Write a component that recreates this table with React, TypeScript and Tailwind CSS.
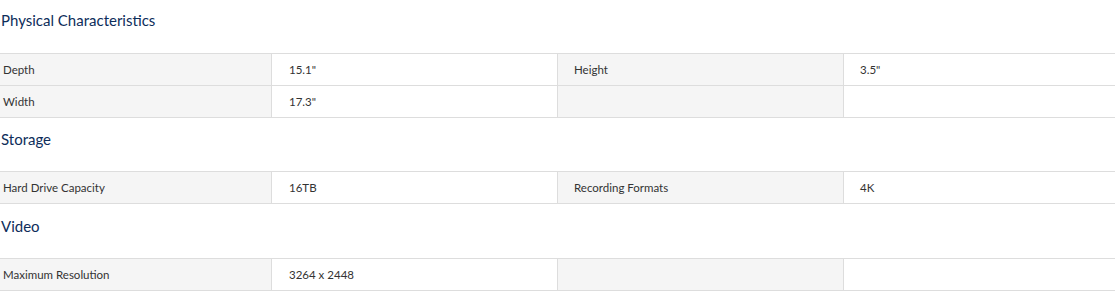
import React from "react";

type Row = [string, string, string, string];

const sections: { title: string; head: string; rows: Row[] }[] = [
  {
    title: "Physical Characteristics",
    head: "h-[53px] pt-[10px]",
    rows: [
      ["Depth", "15.1\"", "Height", "3.5\""],
      ["Width", "17.3\"", "", ""],
    ],
  },
  {
    title: "Storage",
    head: "h-[53px] pt-[11px]",
    rows: [["Hard Drive Capacity", "16TB", "Recording Formats", "4K"]],
  },
  {
    title: "Video",
    head: "h-[54px] pt-[12px]",
    rows: [["Maximum Resolution", "3264 x 2448", "", ""]],
  },
];

function Table({ rows }: { rows: Row[] }) {
  return (
    <div className="border-t border-[#dddddd]">
      {rows.map((r, i) => (
        <div
          key={i}
          className="grid grid-cols-[271px_1px_285px_1px_285px_1px_1fr] h-[32px] border-b border-[#dddddd] text-[11.5px] text-[#333333]"
        >
          <div className="bg-[#f5f5f5] flex items-center pl-[3px]">{r[0]}</div>
          <div className="bg-[#dddddd]" />
          <div className="bg-white flex items-center pl-[17px]">{r[1]}</div>
          <div className="bg-[#dddddd]" />
          <div className="bg-[#f5f5f5] flex items-center pl-[16px]">{r[2]}</div>
          <div className="bg-[#dddddd]" />
          <div className="bg-white flex items-center pl-[16px]">{r[3]}</div>
        </div>
      ))}
    </div>
  );
}

export default function App() {
  return (
    <div
      className="w-[1115px] h-[299px] bg-white overflow-hidden"
      style={{ fontFamily: "Lato, 'Noto Sans', sans-serif" }}
    >
      {sections.map((s) => (
        <div key={s.title}>
          <div className={s.head + " text-[15px] leading-[20px] text-[#0d2d5a] pl-[1px]"}>
            {s.title}
          </div>
          <Table rows={s.rows} />
        </div>
      ))}
    </div>
  );
}
